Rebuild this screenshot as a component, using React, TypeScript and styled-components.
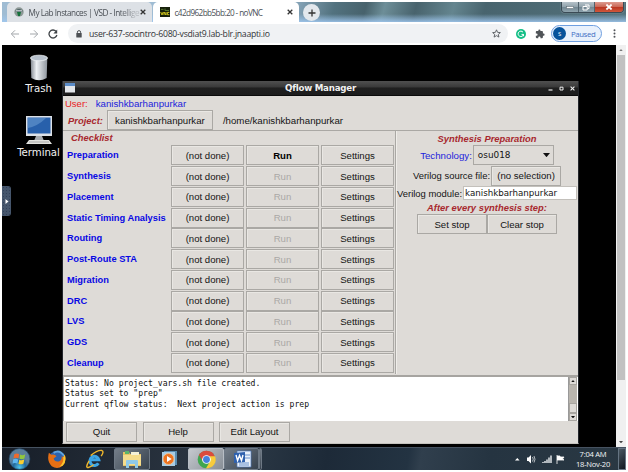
import React from "react";
import styled, { createGlobalStyle } from "styled-components";

const Global = createGlobalStyle`
  * { box-sizing: border-box; }
  html, body { margin: 0; background: #fff; overflow: hidden; }
  body { width: 628px; height: 472px; }
`;

const sans = `"Liberation Sans", Arial, sans-serif`;
const dejavu = `"DejaVu Sans", sans-serif`;
const chromeFont = `"Open Sans", "Noto Sans", sans-serif`;

const Screen = styled.div`
  width: 624px;
  height: 468px;
  margin: 2px;
  display: flex;
  flex-direction: column;
  overflow: hidden;
  background: #000;
  white-space: pre;
`;

/* ---------- browser ---------- */
const TabStrip = styled.div`
  height: 20px;
  flex: none;
  display: flex;
  align-items: flex-start;
  background:
    linear-gradient(180deg, rgba(255,255,255,0) 60%, rgba(160,200,240,0.85) 100%),
    linear-gradient(105deg, #9fbcd3 0 44%, #52727f 53%, #47626c 58%, #6d8e98 61%, #48636d 66%, #64858f 72%, #48646e 77%, #54727c 100%);
`;

const Tab = styled.div<{ $active?: boolean }>`
  height: 20px;
  width: ${(p) => (p.$active ? 146 : 145)}px;
  margin-left: ${(p) => (p.$active ? 1 : 5)}px;
  padding: 0 6px 0 7px;
  border-radius: 5px 5px 0 0;
  background: ${(p) => (p.$active ? "#fff" : "#dde1e6")};
  display: flex;
  align-items: center;
  font: 8.2px ${chromeFont};
  color: #4a4f55;
  svg { flex: none; display: block; }
`;

const TabTitle = styled.span<{ $fade?: boolean; $spacing: number }>`
  flex: 1;
  margin-left: 4.5px;
  letter-spacing: ${(p) => p.$spacing}px;
  ${(p) => p.$fade && "-webkit-mask-image: linear-gradient(90deg, #000 82%, rgba(0,0,0,0.25) 96%);"}
`;

const NewTab = styled.div`
  width: 17px;
  height: 17px;
  margin: 2px 0 0 4px;
  border-radius: 50%;
  background: #e3e8ed;
  display: grid;
  place-items: center;
`;

const WindowControls = styled.div`
  margin: 0 2px 0 auto;
  height: 11px;
  width: 63px;
  display: flex;
  border: 1px solid #3a4a55;
  border-top: 0;
  border-radius: 0 0 4px 4px;
  overflow: hidden;
  box-shadow: 0 0 1px #d5e3ec;
`;

const ControlButton = styled.div<{ $close?: boolean }>`
  flex: ${(p) => (p.$close ? "0 0 28px" : "1")};
  display: grid;
  place-items: center;
  border-right: ${(p) => (p.$close ? "0" : "1px solid #50616b")};
  background: ${(p) =>
    p.$close
      ? "linear-gradient(180deg, #dc9b90 0%, #cc6a58 45%, #b93420 50%, #d0573b 100%)"
      : "linear-gradient(180deg, #b5c2c9 0%, #93a5ae 45%, #708590 50%, #8fa4ae 100%)"};
`;

const Toolbar = styled.div`
  height: 23px;
  flex: none;
  display: flex;
  align-items: center;
  background: #fff;
  padding: 0 10px 0 8px;
  svg { display: block; flex: none; }
`;

const NavIcons = styled.div`
  display: flex;
  gap: 9px;
  width: 58px;
`;

const AddressBar = styled.div`
  height: 19px;
  width: 440px;
  border-radius: 10px;
  background: #f0f2f4;
  display: flex;
  align-items: center;
  padding: 0 7px 0 8px;
  font: 8.7px ${chromeFont};
  color: #303336;
`;

const Url = styled.span`
  flex: 1;
  margin-left: 7px;
  letter-spacing: -0.27px;
`;

const Extensions = styled.div`
  display: flex;
  align-items: center;
  gap: 9px;
  margin-left: 8px;
`;

const ProfileChip = styled.div`
  width: 51px;
  height: 17px;
  margin-left: 6px;
  border: 1px solid #6f9fe0;
  border-radius: 9px;
  background: #e9f1fc;
  display: flex;
  align-items: center;
  font: 7.8px ${chromeFont};
  letter-spacing: -0.4px;
  color: #3f6fc4;
  padding-left: 1px;
`;

const Avatar = styled.span`
  width: 13px;
  height: 13px;
  border-radius: 50%;
  background: #07539b;
  color: #fff;
  font-size: 6px;
  display: grid;
  place-items: center;
  margin-right: 5px;
`;

const MoreDots = styled.div`
  margin-left: auto;
`;

const Viewport = styled.div`
  flex: 1;
  min-height: 0;
  display: flex;
`;

const Desktop = styled.div`
  flex: 1;
  position: relative;
  background: #000;
  overflow: hidden;
`;

const PageScroll = styled.div`
  width: 10px;
  background: #f0f0f0;
  display: flex;
  flex-direction: column;
  align-items: center;
  padding: 4px 0;
  justify-content: space-between;
  svg { display: block; }
`;

const PageThumb = styled.div`
  width: 8px;
  height: 325px;
  margin-top: 4px;
  margin-bottom: auto;
  background: #c1c1c1;
`;

/* ---------- remote desktop ---------- */
const DesktopIcon = styled.div<{ $top: number }>`
  position: absolute;
  left: 6px;
  top: ${(p) => p.$top}px;
  width: 61px;
  display: flex;
  flex-direction: column;
  align-items: center;
  font: 10.2px/13px ${dejavu};
  letter-spacing: -0.05px;
  color: #f2f2f2;
  svg { display: block; }
`;

const VncHandle = styled.div`
  position: absolute;
  left: 0;
  top: 141px;
  width: 9px;
  height: 30px;
  border-radius: 0 3px 3px 0;
  background: radial-gradient(#34425a 35%, transparent 40%) 0 0 / 3px 3px, #46566c;
  display: grid;
  place-items: center;
`;

const AppWindow = styled.div`
  position: absolute;
  left: 60px;
  top: 36px;
  width: 517px;
  height: 363px;
  border: 1px solid #22252a;
  border-top: 0;
  border-bottom: 1px solid #c5c3be;
  background: #dedbd7;
  display: flex;
  flex-direction: column;
  font: 9.7px ${sans};
  color: #141414;
`;

const TitleBar = styled.div`
  height: 15px;
  flex: none;
  display: grid;
  grid-template-columns: 50px 1fr 50px;
  align-items: center;
  background: linear-gradient(180deg, #505050 0%, #3a3a3a 42%, #202020 50%, #1c1c1c 100%);
  border-bottom: 1px solid #0b0b0b;
  color: #f1f1f1;
  font: bold 8.7px/13px ${dejavu};
  letter-spacing: -0.25px;
  text-align: center;
  svg { display: block; }
`;

const TitleButtons = styled.div`
  display: flex;
  gap: 6px;
  justify-self: end;
  padding-right: 3px;
`;

const UserRow = styled.div`
  height: 14px;
  display: flex;
  align-items: center;
  gap: 8px;
  padding-left: 2px;
  flex: none;
`;

const Colored = styled.span<{ $color: string; $size?: number }>`
  color: ${(p) => p.$color};
  ${(p) => p.$size && `font-size: ${p.$size}px;`}
`;

const Heading = styled.span`
  font: italic bold 9.4px ${sans};
  color: #a8282e;
`;

const ProjectRow = styled.div`
  height: 21px;
  flex: none;
  display: flex;
  align-items: center;
  gap: 4px;
  padding-left: 5px;
  border-bottom: 1px solid #aaa8a4;
`;

const Button = styled.button<{ $w?: number; $disabled?: boolean; $strong?: boolean }>`
  width: ${(p) => (p.$w ? `${p.$w}px` : "100%")};
  height: 20px;
  flex: none;
  padding: 0;
  margin: 0;
  border: 1px solid #aaa8a4;
  box-shadow: inset 1px 1px 0 #e9e7e3;
  border-radius: 0;
  background: #dedbd7;
  font: ${(p) => (p.$strong ? "bold" : "normal")} 9.6px ${sans};
  color: ${(p) => (p.$disabled ? "#aaa8a5" : p.$strong ? "#000" : "#141414")};
`;

const Path = styled.span`
  margin-left: 6px;
`;

const Panels = styled.div`
  height: 243px;
  flex: none;
  display: flex;
`;

const ChecklistPanel = styled.div`
  width: 332px;
  padding-left: 4px;
  ${Heading} { display: block; height: 14px; line-height: 14px; padding-left: 4px; }
`;

const ChecklistRow = styled.div`
  display: grid;
  grid-template-columns: 102px 73px 73px 73px;
  column-gap: 2px;
  grid-auto-rows: 20.75px;
  align-items: center;
`;

const StepName = styled.span`
  font: bold 9.3px ${sans};
  color: #0808e4;
`;

const SynthesisPanel = styled.div`
  flex: 1;
  border-left: 1px solid #aaa8a4;
  box-shadow: inset 1px 0 0 #efede9;
  display: flex;
  flex-direction: column;
  align-items: center;
`;

const PanelHeading = styled.div<{ $h: number }>`
  height: ${(p) => p.$h}px;
  display: flex;
  align-items: center;
`;

const FieldRow = styled.div<{ $h: number; $gap?: number }>`
  height: ${(p) => p.$h}px;
  display: flex;
  align-items: center;
  gap: ${(p) => p.$gap ?? 1}px;
`;

const FieldLabel = styled.span`
  font-size: 9.45px;
`;

const Select = styled.div`
  width: 81px;
  height: 20px;
  border: 1px solid #aaa8a4;
  display: flex;
  align-items: center;
  justify-content: space-between;
  padding: 0 3px 0 4px;
  font: 8.9px ${dejavu};
`;

const TextField = styled.div`
  width: 114px;
  height: 14px;
  border: 1px solid #c3c0bb;
  background: #fff;
  padding-left: 1px;
  font: 8.7px/12px ${dejavu};
`;

const ConsoleArea = styled.div`
  height: 46px;
  flex: none;
  margin-top: 1px;
  display: flex;
  border-top: 2px solid #a6a4a0;
  background: #fff;
`;

const Log = styled.div`
  flex: 1;
  padding: 1px 0 0 1px;
  border-left: 1px solid #aaa8a4;
  font: 8.12px/10.4px "DejaVu Sans Mono", monospace;
  color: #111;
`;

const LogScroll = styled.div`
  width: 9px;
  margin-right: 1px;
  border-left: 1px solid #999;
  background: #b9b5ae;
  display: flex;
  flex-direction: column;
`;

const ScrollCell = styled.div<{ $h: number; $push?: boolean }>`
  height: ${(p) => p.$h}px;
  margin-top: ${(p) => (p.$push ? "auto" : "0")};
  background: #dedbd7;
  border: 1px solid #a8a5a0;
  display: grid;
  place-items: center;
`;

const Actions = styled.div`
  display: flex;
  gap: 5.5px;
  padding: 0.5px 0 0 3px;
`;

/* ---------- taskbar ---------- */
const Taskbar = styled.div`
  height: 23px;
  flex: none;
  display: flex;
  align-items: stretch;
  border-top: 1px solid #465260;
  background: linear-gradient(100deg, #171e28 0%, #28323e 28%, #2c3946 38%, #1d2a38 52%, #233342 65%, #303f4d 67%, #253441 78%, #2a3843 100%);
`;

const Task = styled.div<{ $w: number; $look?: "open" | "active" }>`
  width: ${(p) => p.$w}px;
  display: grid;
  place-items: center;
  svg { display: block; }
  ${(p) =>
    p.$look &&
    `border: 1px solid ${p.$look === "active" ? "#b8bec5" : "#6e7985"};
     border-radius: 2px;
     background: ${
       p.$look === "active"
         ? "linear-gradient(135deg, #c5c9ce, #878e96)"
         : "linear-gradient(135deg, #737d88, #37424e)"
     };`}
`;

const Tray = styled.div`
  margin-left: auto;
  display: flex;
  align-items: center;
  svg { display: block; }
`;

const Clock = styled.div`
  width: 46px;
  margin: 0 2px 0 5px;
  text-align: center;
  font: 7.6px/10.5px ${chromeFont};
  letter-spacing: -0.25px;
  color: #f3f5f7;
`;

const ShowDesktop = styled.div`
  width: 8px;
  height: 100%;
  border: 1px solid #657482;
  background: linear-gradient(135deg, #4b5963, #101820);
`;

const steps = [
  "Preparation", "Synthesis", "Placement", "Static Timing Analysis", "Routing",
  "Post-Route STA", "Migration", "DRC", "LVS", "GDS", "Cleanup",
];

const CloseX = ({ color = "#333", size = 6 }) => (
  <svg width={size} height={size} viewBox="0 0 6 6">
    <path d="M.7 .7 5.3 5.3M5.3 .7 .7 5.3" stroke={color} strokeWidth="1.3" />
  </svg>
);

const Arrow = ({ up = false, w = 5, color = "#111" }) => (
  <svg width={w} height={w * 0.6} viewBox="0 0 10 6">
    <path d={up ? "M0 6 5 0 10 6Z" : "M0 0H10L5 6Z"} fill={color} />
  </svg>
);

const Browser = () => (
  <>
    <TabStrip>
      <Tab>
        <svg width="10" height="10" viewBox="0 0 10 10">
          <circle cx="5" cy="5" r="4.7" fill="#8d9896" />
          <path d="M1 4Q5 0 9 4L7 5H3Z" fill="#4b5f64" />
          <path d="M3 5H7L6 9H4Z" fill="#16723c" />
          <path d="M2 3.8H8" stroke="#e3ecec" />
        </svg>
        <TabTitle $fade $spacing={-0.47}>My Lab Instances | VSD - Intellige</TabTitle>
        <CloseX />
      </Tab>
      <Tab $active>
        <svg width="10" height="10" viewBox="0 0 10 10">
          <rect width="10" height="10" fill="#17200b" />
          <path d="M1 2.4H3.5M5 1.5V3.5H9" stroke="#55752e" fill="none" />
          <path d="M.7 5 2 8 3.2 5M4 8V5L6 8V5M9.3 5.4H7.4V7.7H9.3" stroke="#e1d51e" fill="none" strokeWidth=".9" />
        </svg>
        <TabTitle $spacing={-0.6}>c42d962bb5bb:20 - noVNC</TabTitle>
        <CloseX />
      </Tab>
      <NewTab>
        <svg width="8" height="8" viewBox="0 0 8 8"><path d="M4 .5V7.5M.5 4H7.5" stroke="#333" strokeWidth="1.3" /></svg>
      </NewTab>
      <WindowControls>
        <ControlButton>
          <svg width="8" height="3"><rect x=".5" y=".5" width="7" height="2" fill="#fff" stroke="#55636b" strokeWidth=".5" /></svg>
        </ControlButton>
        <ControlButton>
          <svg width="8" height="7" viewBox="0 0 8 7">
            <path d="M3 1H7V4.6H5.6M1 2.5H5.2V6H1Z" stroke="#fff" fill="none" />
          </svg>
        </ControlButton>
        <ControlButton $close>
          <svg width="8" height="6" viewBox="0 0 8 6"><path d="M1.4 .5 6.6 5.5M6.6 .5 1.4 5.5" stroke="#fff" strokeWidth="1.8" /></svg>
        </ControlButton>
      </WindowControls>
    </TabStrip>
    <Toolbar>
      <NavIcons>
        <svg width="10" height="10" viewBox="0 0 10 10"><path d="M9 5H1.5M5 1.3 1.3 5 5 8.7" stroke="#a3a7ab" fill="none" /></svg>
        <svg width="10" height="10" viewBox="0 0 10 10"><path d="M1 5H8.5M5 1.3 8.7 5 5 8.7" stroke="#a3a7ab" fill="none" /></svg>
        <svg width="10" height="10" viewBox="0 0 10 10">
          <path d="M8 2.3A4 4 0 1 0 8.9 6" stroke="#3f4347" fill="none" strokeWidth="1.3" />
          <path d="M9.2 .6V4.4H5.4Z" fill="#3f4347" />
        </svg>
      </NavIcons>
      <AddressBar>
        <svg width="6" height="8" viewBox="0 0 6 8">
          <rect x=".3" y="3" width="5.4" height="4.6" rx=".6" fill="#4c5054" />
          <path d="M1.4 3.2V2.2A1.6 1.6 0 0 1 4.6 2.2V3.2" stroke="#4c5054" fill="none" />
        </svg>
        <Url>user-637-socintro-6080-vsdiat9.lab-blr.jnaapti.io</Url>
        <svg width="9" height="9" viewBox="0 0 10 10">
          <path d="M5 .9 6.2 3.7 9.3 4 7 6 7.7 9 5 7.4 2.3 9 3 6 .7 4 3.8 3.7Z" stroke="#55595d" fill="none" strokeWidth="1" />
        </svg>
      </AddressBar>
      <Extensions>
        <svg width="10" height="10" viewBox="0 0 10 10">
          <circle cx="5" cy="5" r="5" fill="#16bf87" />
          <path d="M7 3.2A2.7 2.7 0 1 0 7.5 5.4H5.5M7.5 5.3V7.2" stroke="#fff" fill="none" strokeWidth="1" />
        </svg>
        <svg width="10" height="10" viewBox="0 0 24 24">
          <path fill="#505458" d="M20.5 11H19V7a2 2 0 0 0-2-2h-4V3.500a2.500 2.500 0 0 0-5 0V5H4a2 2 0 0 0-2 2v3.800h1.500a2.700 2.700 0 0 1 0 5.400H2V20a2 2 0 0 0 2 2h3.800v-1.500a2.700 2.700 0 0 1 5.400 0V22H17a2 2 0 0 0 2-2v-4h1.500a2.500 2.500 0 0 0 0-5z" />
        </svg>
      </Extensions>
      <ProfileChip><Avatar>S</Avatar>Paused</ProfileChip>
      <MoreDots>
        <svg width="3" height="9" viewBox="0 0 3 9">
          <g fill="#505458"><circle cx="1.5" cy="1.2" r="1" /><circle cx="1.5" cy="4.5" r="1" /><circle cx="1.5" cy="7.8" r="1" /></g>
        </svg>
      </MoreDots>
    </Toolbar>
  </>
);

const Qflow = () => (
  <AppWindow>
    <TitleBar>
      <svg width="14" height="10" viewBox="0 0 14 10">
        <rect x="2" width="10" height="9.500" fill="#e3e6ea" />
        <rect x="2" width="10" height="3" fill="#5c8dc9" />
      </svg>
      <span>Qflow Manager</span>
      <TitleButtons>
        <svg width="5" height="5"><path d="M.5 4H4.500" stroke="#eee" strokeWidth="1.2" /></svg>
        <svg width="5" height="5"><path d="M1 1.200H4V4H1Z" stroke="#eee" fill="none" /></svg>
        <CloseX color="#eee" size={5} />
      </TitleButtons>
    </TitleBar>
    <UserRow>
      <Colored $color="#e8201c" $size={9.5}>User:</Colored>
      <Colored $color="#2222dc">kanishkbarhanpurkar</Colored>
    </UserRow>
    <ProjectRow>
      <Heading>Project:</Heading>
      <Button $w={106}>kanishkbarhanpurkar</Button>
      <Path>/home/kanishkbarhanpurkar</Path>
    </ProjectRow>
    <Panels>
      <ChecklistPanel>
        <Heading>Checklist</Heading>
        {steps.map((name, i) => (
          <ChecklistRow key={name}>
            <StepName>{name}</StepName>
            <Button>(not done)</Button>
            <Button $strong={i === 0} $disabled={i > 0}>Run</Button>
            <Button>Settings</Button>
          </ChecklistRow>
        ))}
      </ChecklistPanel>
      <SynthesisPanel>
        <PanelHeading $h={14}><Heading>Synthesis Preparation</Heading></PanelHeading>
        <FieldRow $h={20.5}>
          <Colored $color="#2222dc">Technology:</Colored>
          <Select>osu018<Arrow w={7} /></Select>
        </FieldRow>
        <FieldRow $h={20.5}>
          <FieldLabel>Verilog source file:</FieldLabel>
          <Button $w={70}>(no selection)</Button>
        </FieldRow>
        <FieldRow $h={14}>
          <FieldLabel>Verilog module:</FieldLabel>
          <TextField>kanishkbarhanpurkar</TextField>
        </FieldRow>
        <PanelHeading $h={14}><Heading>After every synthesis step:</Heading></PanelHeading>
        <FieldRow $h={20} $gap={0}>
          <Button $w={70}>Set stop</Button>
          <Button $w={70}>Clear stop</Button>
        </FieldRow>
      </SynthesisPanel>
    </Panels>
    <ConsoleArea>
      <Log>{'Status: No project_vars.sh file created.\nStatus set to "prep"\nCurrent qflow status:  Next project action is prep'}</Log>
      <LogScroll>
        <ScrollCell $h={8}><Arrow up w={4} /></ScrollCell>
        <ScrollCell $h={10} $push />
        <ScrollCell $h={8}><Arrow w={4} /></ScrollCell>
      </LogScroll>
    </ConsoleArea>
    <Actions>
      <Button $w={71}>Quit</Button>
      <Button $w={71}>Help</Button>
      <Button $w={71}>Edit Layout</Button>
    </Actions>
  </AppWindow>
);

const Bottom = () => (
  <Taskbar>
    <Task $w={34}>
      <svg width="23" height="22" viewBox="0 0 22 21">
        <defs><radialGradient id="orb" cy=".9"><stop offset="0" stopColor="#52c6ec" /><stop offset=".6" stopColor="#24689b" /><stop offset="1" stopColor="#5c7f9b" /></radialGradient></defs>
        <circle cx="11" cy="10.500" r="10" fill="url(#orb)" stroke="#1d4567" strokeWidth=".6" />
        <path d="M6 6Q8.500 4.500 10.700 6L10 10Q8 8.800 5.200 10Z" fill="#ee6a2c" />
        <path d="M11.600 6.300Q14 7.500 16.500 6L15.700 10Q13.500 11.300 11 10.300Z" fill="#92c83e" />
        <path d="M5 10.800Q7.500 9.600 9.800 11L9 15Q7 13.600 4.300 14.800Z" fill="#5fb6ee" />
        <path d="M10.800 11.200Q13 12.300 15.500 11L14.800 14.800Q12.500 16.300 10 15Z" fill="#fbce30" />
      </svg>
    </Task>
    <Task $w={40}>
      <svg width="19" height="19" viewBox="0 0 20 20">
        <circle cx="10.500" cy="9.500" r="8.500" fill="#2b62ae" />
        <path d="M7 3Q13 -1 18 6" stroke="#5fa3dd" strokeWidth="2" fill="none" />
        <path d="M2 3 4.500 5Q8 4 10 6.500L7 9Q8 13 12.500 12Q16 11 15.500 6L17 8 18.700 5Q21 12 16.500 16.500Q11 21 5 17Q-.5 12 2 3Z" fill="#e66f14" />
        <path d="M18.700 5Q21 12 16.500 16.500L13 17.500Q18 13 17 8Z" fill="#fbc62c" />
      </svg>
    </Task>
    <Task $w={38}>
      <svg width="20" height="20" viewBox="0 0 21 20">
        <path d="M6 10.800H14.500A4.700 4.900 0 1 0 14 14.500" stroke="#3da6e6" strokeWidth="3.200" fill="none" />
        <path d="M4.300 12Q-.5 20 4 18.700Q7 17.700 9 16" stroke="#efb62c" strokeWidth="1.500" fill="none" />
        <path d="M6 6.500Q13 .5 17.500 1Q20.500 1.800 17 7" stroke="#efb62c" strokeWidth="1.500" fill="none" />
      </svg>
    </Task>
    <Task $w={36} $look="open">
      <svg width="22" height="19" viewBox="0 0 22 19">
        <path d="M2 2H8L9 4H20V16H2Z" fill="#e8c565" />
        <path d="M4 1H8V4H4Z" fill="#5cb46b" /><path d="M10 2H18V5H10Z" fill="#f4f0d6" />
        <path d="M2 5H20V15H2Z" fill="#f5dc8c" />
        <path d="M5 18V11Q5 10 6 10H16Q17 10 17 11V18H14V14H8V18Z" fill="#8ec9ea" />
      </svg>
    </Task>
    <Task $w={38}>
      <svg width="17" height="16" viewBox="0 0 17 16">
        <rect x="3" y="0" width="13" height="14" fill="#598db1" /><rect x="1" y="1" width="13" height="14" fill="#a8cce4" />
        <circle cx="7.500" cy="8" r="5.500" fill="#ec7321" stroke="#f8c690" strokeWidth=".8" />
        <path d="M6 5 10.700 8 6 11Z" fill="#fff" />
      </svg>
    </Task>
    <Task $w={36} $look="active">
      <svg width="19" height="19" viewBox="0 0 20 20">
        <circle cx="10" cy="10" r="9.300" fill="#3fa650" />
        <path d="M10 .7A9.300 9.300 0 0 1 19 7.500H10L6 11.500 2 5.300A9.300 9.300 0 0 1 10 .7Z" fill="#db4b3d" />
        <path d="M19 6.500A9.300 9.300 0 0 1 9.500 19.300L14 11.500 13 6.500Z" fill="#f7cb3c" />
        <circle cx="10" cy="10" r="4.600" fill="#fff" /><circle cx="10" cy="10" r="3.600" fill="#4480de" />
      </svg>
    </Task>
    <Task $w={35} $look="open">
      <svg width="20" height="19" viewBox="0 0 20 19">
        <path d="M5 1H19V17H5Z" fill="#e8f0fa" stroke="#4b75b8" strokeWidth=".7" />
        <path d="M13 5H18M13 8H18M7 13H17M7 15H17" stroke="#6b92cc" />
        <path d="M2 3 13 2V12L2 13Z" fill="#2f61ae" />
        <path d="M4 5 5.600 10.500 7.500 5.500 9.500 10.500 11 5" stroke="#fff" strokeWidth="1.400" fill="none" />
      </svg>
    </Task>
    <Task $w={3} $look="open" />
    <Tray>
      <svg width="50" height="12" viewBox="0 0 50 12">
        <path d="M0 7.500 2.300 5 4.600 7.500Z" fill="#fff" />
        <path d="M12 4.500H13.500L16 2V10.500L13.500 8H12Z" fill="#fff" />
        <path d="M17.500 4Q19 6.200 17.500 8.500M19 3Q21 6.200 19 9.500" stroke="#d9dde1" fill="none" strokeWidth=".8" />
        <path d="M28 9V10M30 8V10M32 6.500V10M34 4.500V10M36 2.500V10" stroke="#edf0f2" strokeWidth="1.400" />
        <path d="M42 2V11M42 3H45V7H42M45 4H49L47.500 6 49 7H45" stroke="#fff" fill="#fff" strokeWidth=".8" />
      </svg>
      <Clock>{"7:04 AM\n18-Nov-20"}</Clock>
      <ShowDesktop />
    </Tray>
  </Taskbar>
);

export default function App() {
  return (
    <>
      <Global />
      <Screen>
        <Browser />
        <Viewport>
          <Desktop>
            <DesktopIcon $top={8.5}>
              <svg width="20" height="28" viewBox="0 0 20 28">
                <defs><linearGradient id="bin"><stop offset="0" stopColor="#858b93" /><stop offset=".35" stopColor="#eef1f4" /><stop offset="1" stopColor="#8f969e" /></linearGradient></defs>
                <path d="M1.700 4 2.300 24Q10 28.500 17.700 24L18.300 4Z" fill="url(#bin)" />
                <ellipse cx="10" cy="4" rx="8.500" ry="2.800" fill="#b7c1cc" stroke="#eef1f4" strokeWidth=".8" />
              </svg>
              Trash
            </DesktopIcon>
            <DesktopIcon $top={70}>
              <svg width="28" height="31" viewBox="0 0 28 31">
                <rect x="1" y="1" width="26" height="20" fill="#dce1e7" />
                <rect x="2.500" y="2.500" width="23" height="16" fill="#2860ab" />
                <path d="M3 13Q13 11 21 3H3Z" fill="#4f83c2" />
                <path d="M11 21H17L19 26H9Z" fill="#a7abb0" />
                <path d="M4 25H24L27 29H1Z" fill="#e3e3df" /><path d="M4 27H24" stroke="#999" strokeWidth=".8" />
              </svg>
              Terminal
            </DesktopIcon>
            <VncHandle><svg width="4" height="5"><path d="M.5 0 3.500 2.500 .5 5Z" fill="#fff" /></svg></VncHandle>
            <Qflow />
          </Desktop>
          <PageScroll>
            <Arrow up w={4} color="#777" />
            <PageThumb />
            <Arrow w={4} color="#444" />
          </PageScroll>
        </Viewport>
        <Bottom />
      </Screen>
    </>
  );
}
